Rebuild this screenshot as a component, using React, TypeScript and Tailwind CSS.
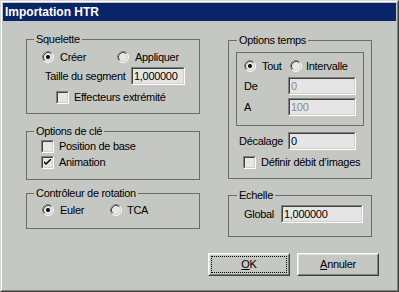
import type { ReactNode } from 'react'

// =============================================================
//  Petits contrôles façon Windows classique
// =============================================================

const BG = 'bg-[#c5c7c3]'

function Radio({ checked }: { checked?: boolean }) {
  return (
    <svg width="12" height="12" viewBox="0 0 12 12" className="shrink-0">
      <circle cx="6" cy="6" r="5" fill="#e6e6e6" />
      <path d="M2.11 9.89 A5.5 5.5 0 0 1 9.89 2.11" fill="none" stroke="#808080" strokeWidth="1" />
      <path d="M9.89 2.11 A5.5 5.5 0 0 1 2.11 9.89" fill="none" stroke="#ffffff" strokeWidth="1" />
      <path d="M2.82 9.18 A4.5 4.5 0 0 1 9.18 2.82" fill="none" stroke="#404040" strokeWidth="1" />
      <path d="M9.18 2.82 A4.5 4.5 0 0 1 2.82 9.18" fill="none" stroke="#d4d0c8" strokeWidth="1" />
      {checked && <circle cx="6" cy="6" r="2" fill="#000" />}
    </svg>
  )
}

function RadioItem({ label, checked, className = '', gap = 'gap-[6px]' }: { label: string; checked?: boolean; className?: string; gap?: string }) {
  return (
    <div className={`flex items-center whitespace-nowrap ${gap} ${className}`}>
      <Radio checked={checked} />
      <span>{label}</span>
    </div>
  )
}

function Check({ label, checked }: { label: string; checked?: boolean }) {
  return (
    <div className="flex items-center gap-[5px] h-[13px] whitespace-nowrap">
      <div className="w-[13px] h-[13px] shrink-0 border border-t-[#808080] border-l-[#808080] border-b-white border-r-white">
        <div className="w-full h-full border border-t-[#404040] border-l-[#404040] border-b-[#d4d0c8] border-r-[#d4d0c8] bg-[#e6e6e6] flex items-center justify-center">
          {checked && (
            <svg width="7" height="7" viewBox="0 0 7 7">
              <path d="M0 2 L0 4 L2 6 L7 1 L7 -1 L2 4 Z" fill="#000" />
            </svg>
          )}
        </div>
      </div>
      <span>{label}</span>
    </div>
  )
}

function Field({ value, width, disabled }: { value: string; width: string; disabled?: boolean }) {
  return (
    <div className={`${width} h-[18px] shrink-0 border border-t-[#808080] border-l-[#808080] border-b-white border-r-white`}>
      <div className={`w-full h-full border border-t-[#404040] border-l-[#404040] border-b-[#d4d0c8] border-r-[#d4d0c8] bg-[#e6e5e6] pl-[1px] leading-[14px] ${disabled ? 'text-[#8a8a8a]' : 'text-black'}`}>
        {value}
      </div>
    </div>
  )
}

function Group({ title, legend, className, children }: { title?: string; legend?: string; className: string; children: ReactNode }) {
  return (
    <div className={`relative box-border border border-[#6b6d6a] ${className}`}>
      {title && (
        <span className={`absolute top-[-7px] px-[2px] leading-[13px] whitespace-nowrap ${BG} ${legend ?? 'left-[7px]'}`}>{title}</span>
      )}
      {children}
    </div>
  )
}

function Button({ children, focus }: { children: ReactNode; focus?: boolean }) {
  return (
    <div className="w-[82px] h-[23px] border border-t-white border-l-white border-b-[#404040] border-r-[#404040]">
      <div className="w-full h-full border border-t-[#e3e3e3] border-l-[#e3e3e3] border-b-[#808080] border-r-[#808080] p-[1px]">
        <div className={`w-full h-full flex items-center justify-center border ${focus ? 'border-dotted border-black' : 'border-transparent'}`}>
          {children}
        </div>
      </div>
    </div>
  )
}

// =============================================================
//  Dialogue
// =============================================================

export default function App() {
  return (
    <div
      className="w-[399px] h-[292px] border border-t-[#d8d8d8] border-l-[#d8d8d8] border-b-[#404040] border-r-[#404040] text-[11px] tracking-[-0.3px] text-black leading-[13px]"
      style={{ fontFamily: '"Liberation Sans", Arial, sans-serif' }}
    >
      <div className={`w-full h-full border border-t-white border-l-white border-b-[#808080] border-r-[#808080] p-[1px] ${BG} flex flex-col`}>
        {/* Barre de titre */}
        <div className="h-[18px] bg-[#0a246a] flex items-center pl-[2px]">
          <span className="text-white font-bold text-[12px] tracking-normal">Importation HTR</span>
        </div>

        {/* Contenu */}
        <div className="flex pt-[18px] pl-[23px]">
          {/* Colonne gauche */}
          <div className="w-[174px] flex flex-col">
            <Group title="Squelette" className="h-[75px] pt-[11px]">
              <div className="flex items-center h-[12px] pl-[15px]">
                <RadioItem label="Créer" checked className="w-[75px]" />
                <RadioItem label="Appliquer" />
              </div>
              <div className="mt-[4px] flex items-center h-[18px] pl-[18px]">
                <span className="w-[86px] whitespace-nowrap">Taille du segment</span>
                <Field value="1,000000" width="w-[54px]" />
              </div>
              <div className="mt-[6px] pl-[29px]">
                <Check label="Effecteurs extrémité" />
              </div>
            </Group>

            <Group title="Options de clé" className="mt-[17px] h-[49px] pt-[8px] pl-[14px]">
              <Check label="Position de base" />
              <div className="mt-[3px]">
                <Check label="Animation" checked />
              </div>
            </Group>

            <Group title="Contrôleur de rotation" className="mt-[13px] h-[36px] pt-[10px] pl-[15px]">
              <div className="flex items-center h-[12px]">
                <RadioItem label="Euler" checked className="w-[68px]" />
                <RadioItem label="TCA" gap="gap-[5px]" />
              </div>
            </Group>
          </div>

          {/* Colonne droite */}
          <div className="ml-[28px] mt-[1px] w-[144px] flex flex-col">
            <Group title="Options temps" legend="left-[8px]" className="h-[139px] pt-[11px] px-[7px]">
              <Group className="h-[74px] pt-[7px] pl-[7px]">
                <div className="flex items-center h-[12px]">
                  <RadioItem label="Tout" checked className="w-[46px]" />
                  <RadioItem label="Intervalle" gap="gap-[4px]" />
                </div>
                <div className="mt-[5px] flex items-center h-[18px]">
                  <span className="w-[44px]">De</span>
                  <Field value="0" width="w-[68px]" disabled />
                </div>
                <div className="mt-[3px] flex items-center h-[18px]">
                  <span className="w-[44px]">A</span>
                  <Field value="100" width="w-[68px]" disabled />
                </div>
              </Group>
              <div className="mt-[6px] flex items-center h-[18px] pl-[3px]">
                <span className="w-[49px]">Décalage</span>
                <Field value="0" width="w-[68px]" />
              </div>
              <div className="mt-[6px] pl-[7px]">
                <Check label="Définir débit d’images" />
              </div>
            </Group>

            <Group title="Echelle" legend="left-[8px]" className="mt-[16px] h-[42px] pt-[9px] pl-[15px]">
              <div className="flex items-center h-[18px]">
                <span className="w-[37px]">Global</span>
                <Field value="1,000000" width="w-[82px]" />
              </div>
            </Group>
          </div>
        </div>

        {/* Boutons */}
        <div className="mt-[16px] flex justify-end gap-[7px] pr-[17px]">
          <Button focus>
            <span><u>O</u>K</span>
          </Button>
          <Button>
            <span><u>A</u>nnuler</span>
          </Button>
        </div>
      </div>
    </div>
  )
}
